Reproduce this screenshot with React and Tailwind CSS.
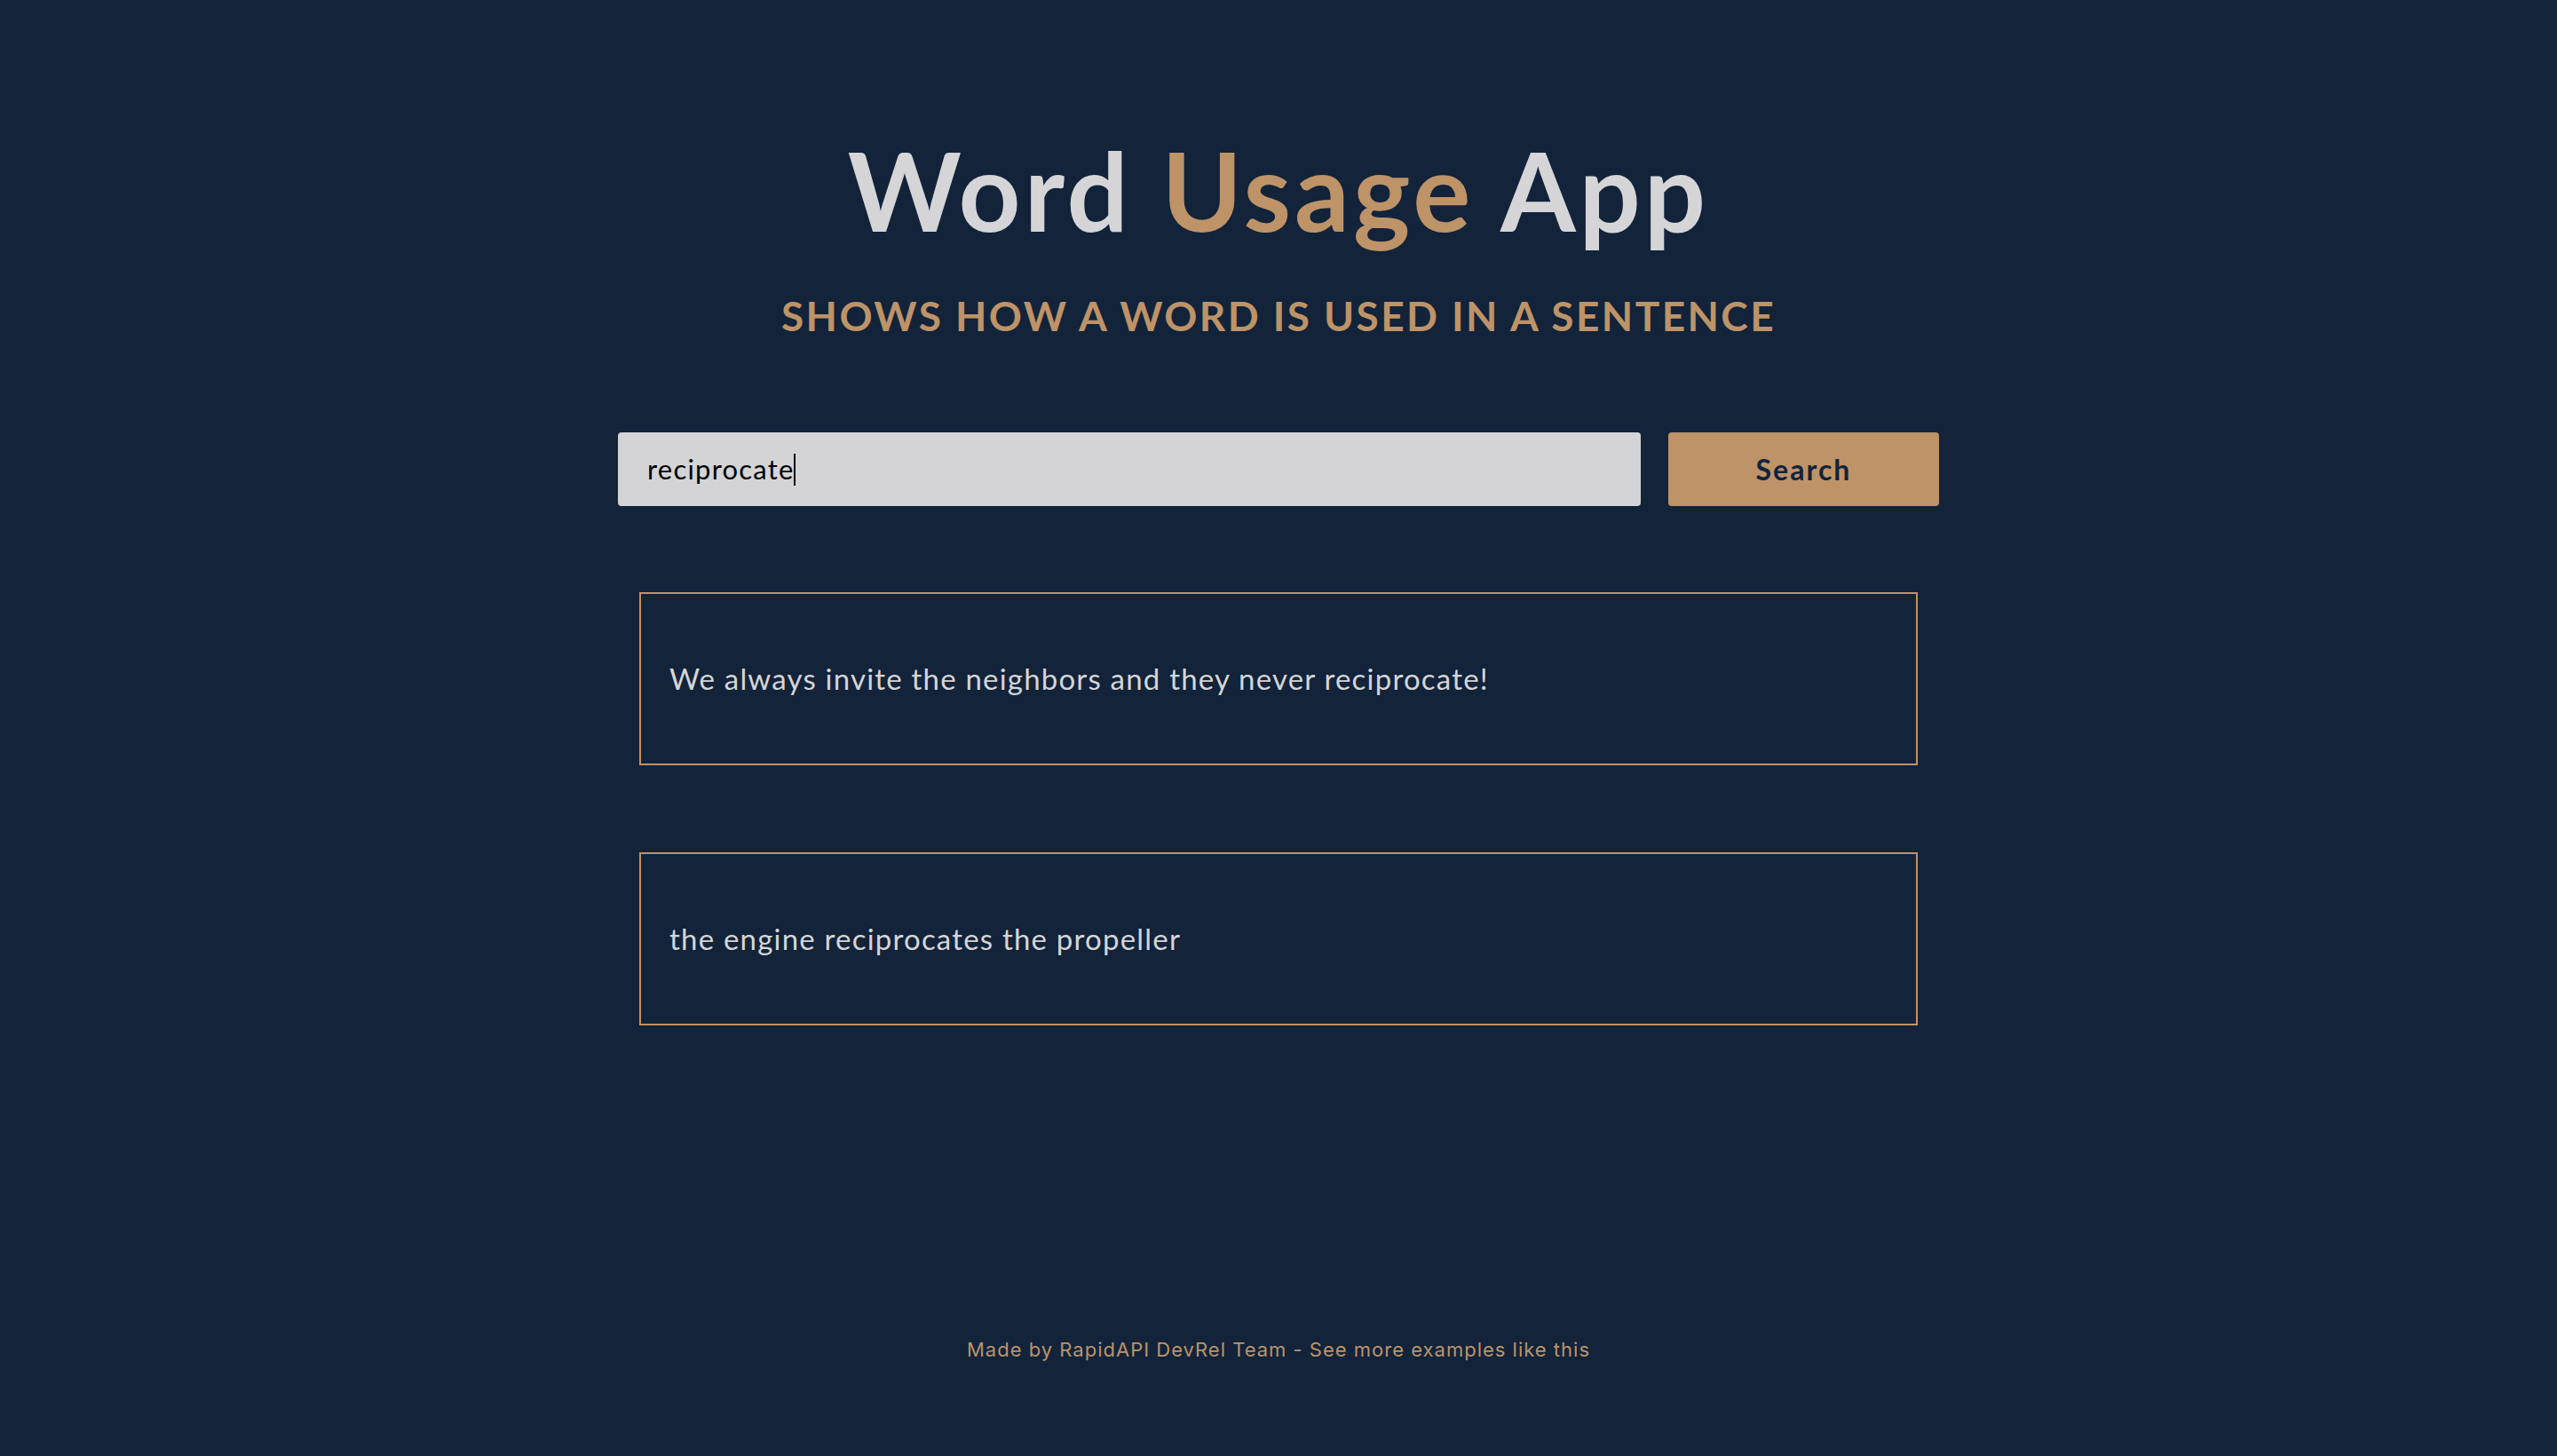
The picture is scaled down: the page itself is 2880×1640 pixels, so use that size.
const sentences = [
  'We always invite the neighbors and they never reciprocate!',
  'the engine reciprocates the propeller',
];

export default function App() {
  return (
    <div className="min-h-screen bg-[#12233a] flex flex-col items-center font-['Lato',sans-serif]">
      {/* Header */}
      <h1 className="mt-[153px] text-[122px] leading-none font-bold tracking-[4px] text-[#d5d5d7]">
        Word <span className="text-[#bd9367]">Usage</span> App
      </h1>
      <p className="mt-[58px] text-[46px] leading-none font-bold uppercase tracking-[2.4px] text-[#bd9367]">
        Shows how a word is used in a sentence
      </p>

      {/* Search */}
      <div className="mt-[108px] flex gap-[31px]">
        <div className="w-[1152px] h-[83px] bg-[#d4d4d6] rounded-[4px] flex items-center px-[33px]">
          <span className="text-[31px] tracking-[1.2px] text-black">reciprocate</span>
          <span className="w-[2px] h-[36px] bg-black" />
        </div>
        <button className="w-[305px] h-[83px] bg-[#bd9367] rounded-[4px] text-[32px] tracking-[2px] font-bold text-[#13233b]">
          Search
        </button>
      </div>

      {/* Results */}
      <div className="mt-[97px] flex flex-col gap-[98px]">
        {sentences.map((s) => (
          <div key={s} className="w-[1440px] h-[195px] border-2 border-[#bd9367] flex items-center px-[32px]">
            <p className="text-[33px] tracking-[1.2px] text-[#d5d5d7]">{s}</p>
          </div>
        ))}
      </div>

      <footer className="mt-auto mb-[103px] text-[22px] tracking-[1px] text-[#bd9367] font-['Inter',sans-serif]">
        Made by RapidAPI DevRel Team - See more examples like this
      </footer>
    </div>
  );
}
